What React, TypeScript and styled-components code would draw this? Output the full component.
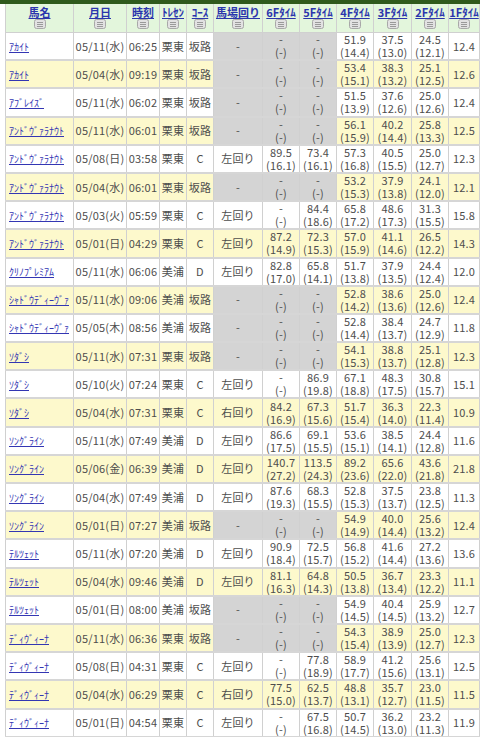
import styled, { createGlobalStyle } from "styled-components"

const GlobalStyle = createGlobalStyle`
  html, body {
    margin: 0;
    padding: 0;
    background: #fff;
  }
  body {
    font-family: "Noto Sans CJK JP", "Noto Sans", sans-serif;
  }
`

const TopBar = styled.div`
  height: 4px;
  background: #2f5a1c;
`

const Wrapper = styled.div`
  width: 100%;
  overflow: hidden;
  padding-left: 5px;
  box-sizing: border-box;
`

const Table = styled.table`
  border-collapse: collapse;
  table-layout: fixed;
  width: 474px;
  font-size: 11px;
  color: #4d4d4d;
`

const HeadCell = styled.th`
  background: #e3f6dc;
  border: 1px solid #d0d0d0;
  border-top: none;
  height: 28px;
  padding: 0;
  vertical-align: top;
  text-align: center;
  white-space: nowrap;
  overflow: hidden;
`

const HeadLink = styled.a`
  display: block;
  color: #2b35ad;
  font-weight: bold;
  font-size: 11px;
  line-height: 14px;
  margin-top: 1px;
  text-decoration: underline;
`

const SortIcon = styled.svg`
  display: block;
  margin: 0 auto;
`

type Tone = "white" | "yellow" | "grey"

const toneColor: Record<Tone, string> = {
  white: "#ffffff",
  yellow: "#fdf9cc",
  grey: "#d4d4d4",
}

const Cell = styled.td<{ $tone: Tone; $left?: boolean }>`
  background: ${(p) => toneColor[p.$tone]};
  border-left: 1px solid #d0d0d0;
  border-right: 1px solid #d0d0d0;
  border-bottom: 2px solid #d6d6d6;
  height: 26.2px;
  padding: 0 ${(p) => (p.$left ? "3px" : "0")};
  text-align: ${(p) => (p.$left ? "left" : "center")};
  vertical-align: middle;
  white-space: nowrap;
  overflow: hidden;
  line-height: 13px;
  letter-spacing: 0.2px;
`

const NameLink = styled.a`
  color: #3336b3;
  font-size: 10px;
  letter-spacing: 0;
  text-decoration: underline;
`

const Pair = styled.div`
  line-height: 13px;
`

type Split = [string, string] | null

interface Row {
  name: string
  date: string
  time: string
  center: string
  course: string
  turn: string
  f6: Split
  f5: Split
  f4: Split
  f3: Split
  f2: Split
  f1: string
}

const r = (
  name: string,
  date: string,
  time: string,
  center: string,
  course: string,
  turn: string,
  f6: Split,
  f5: Split,
  f4: Split,
  f3: Split,
  f2: Split,
  f1: string
): Row => ({ name, date, time, center, course, turn, f6, f5, f4, f3, f2, f1 })

const D: Split = ["-", "(-)"]
const s = (a: string, b: string): Split => [a, `(${b})`]

const rows: Row[] = [
  r("ｱｶｲﾄ", "05/11(水)", "06:25", "栗東", "坂路", "-", D, D, s("51.9", "14.4"), s("37.5", "13.0"), s("24.5", "12.1"), "12.4"),
  r("ｱｶｲﾄ", "05/04(水)", "09:19", "栗東", "坂路", "-", D, D, s("53.4", "15.1"), s("38.3", "13.2"), s("25.1", "12.5"), "12.6"),
  r("ｱﾌﾞﾚｲｽﾞ", "05/11(水)", "06:02", "栗東", "坂路", "-", D, D, s("51.5", "13.9"), s("37.6", "12.6"), s("25.0", "12.6"), "12.4"),
  r("ｱﾝﾄﾞｳﾞｧﾗﾅｳﾄ", "05/11(水)", "06:01", "栗東", "坂路", "-", D, D, s("56.1", "15.9"), s("40.2", "14.4"), s("25.8", "13.3"), "12.5"),
  r("ｱﾝﾄﾞｳﾞｧﾗﾅｳﾄ", "05/08(日)", "03:58", "栗東", "C", "左回り", s("89.5", "16.1"), s("73.4", "16.1"), s("57.3", "16.8"), s("40.5", "15.5"), s("25.0", "12.7"), "12.3"),
  r("ｱﾝﾄﾞｳﾞｧﾗﾅｳﾄ", "05/04(水)", "06:01", "栗東", "坂路", "-", D, D, s("53.2", "15.3"), s("37.9", "13.8"), s("24.1", "12.0"), "12.1"),
  r("ｱﾝﾄﾞｳﾞｧﾗﾅｳﾄ", "05/03(火)", "05:59", "栗東", "C", "左回り", D, s("84.4", "18.6"), s("65.8", "17.2"), s("48.6", "17.3"), s("31.3", "15.5"), "15.8"),
  r("ｱﾝﾄﾞｳﾞｧﾗﾅｳﾄ", "05/01(日)", "04:29", "栗東", "C", "左回り", s("87.2", "14.9"), s("72.3", "15.3"), s("57.0", "15.9"), s("41.1", "14.6"), s("26.5", "12.2"), "14.3"),
  r("ｸﾘﾉﾌﾟﾚﾐｱﾑ", "05/11(水)", "06:06", "美浦", "D", "左回り", s("82.8", "17.0"), s("65.8", "14.1"), s("51.7", "13.8"), s("37.9", "13.5"), s("24.4", "12.4"), "12.0"),
  r("ｼｬﾄﾞｳﾃﾞｨｰｳﾞｧ", "05/11(水)", "09:06", "美浦", "坂路", "-", D, D, s("52.8", "14.2"), s("38.6", "13.6"), s("25.0", "12.6"), "12.4"),
  r("ｼｬﾄﾞｳﾃﾞｨｰｳﾞｧ", "05/05(木)", "08:56", "美浦", "坂路", "-", D, D, s("52.8", "14.4"), s("38.4", "13.7"), s("24.7", "12.9"), "11.8"),
  r("ｿﾀﾞｼ", "05/11(水)", "07:31", "栗東", "坂路", "-", D, D, s("54.1", "15.3"), s("38.8", "13.7"), s("25.1", "12.8"), "12.3"),
  r("ｿﾀﾞｼ", "05/10(火)", "07:24", "栗東", "C", "左回り", D, s("86.9", "19.8"), s("67.1", "18.8"), s("48.3", "17.5"), s("30.8", "15.7"), "15.1"),
  r("ｿﾀﾞｼ", "05/04(水)", "07:31", "栗東", "C", "右回り", s("84.2", "16.9"), s("67.3", "15.6"), s("51.7", "15.4"), s("36.3", "14.0"), s("22.3", "11.4"), "10.9"),
  r("ｿﾝｸﾞﾗｲﾝ", "05/11(水)", "07:49", "美浦", "D", "左回り", s("86.6", "17.5"), s("69.1", "15.5"), s("53.6", "15.1"), s("38.5", "14.1"), s("24.4", "12.8"), "11.6"),
  r("ｿﾝｸﾞﾗｲﾝ", "05/06(金)", "06:39", "美浦", "D", "左回り", s("140.7", "27.2"), s("113.5", "24.3"), s("89.2", "23.6"), s("65.6", "22.0"), s("43.6", "21.8"), "21.8"),
  r("ｿﾝｸﾞﾗｲﾝ", "05/04(水)", "07:49", "美浦", "D", "左回り", s("87.6", "19.3"), s("68.3", "15.5"), s("52.8", "15.3"), s("37.5", "13.7"), s("23.8", "12.5"), "11.3"),
  r("ｿﾝｸﾞﾗｲﾝ", "05/01(日)", "07:27", "美浦", "坂路", "-", D, D, s("54.9", "14.9"), s("40.0", "14.4"), s("25.6", "13.2"), "12.4"),
  r("ﾃﾙﾂｪｯﾄ", "05/11(水)", "07:20", "美浦", "D", "左回り", s("90.9", "18.4"), s("72.5", "15.7"), s("56.8", "15.2"), s("41.6", "14.4"), s("27.2", "13.6"), "13.6"),
  r("ﾃﾙﾂｪｯﾄ", "05/04(水)", "09:46", "美浦", "D", "左回り", s("81.1", "16.3"), s("64.8", "14.3"), s("50.5", "13.8"), s("36.7", "13.4"), s("23.3", "12.2"), "11.1"),
  r("ﾃﾙﾂｪｯﾄ", "05/01(日)", "08:00", "美浦", "坂路", "-", D, D, s("54.9", "14.5"), s("40.4", "14.5"), s("25.9", "13.2"), "12.7"),
  r("ﾃﾞｨｳﾞｨｰﾅ", "05/11(水)", "06:36", "栗東", "坂路", "-", D, D, s("54.3", "15.4"), s("38.9", "13.9"), s("25.0", "12.7"), "12.3"),
  r("ﾃﾞｨｳﾞｨｰﾅ", "05/08(日)", "04:31", "栗東", "C", "左回り", D, s("77.8", "18.9"), s("58.9", "17.7"), s("41.2", "15.6"), s("25.6", "13.1"), "12.5"),
  r("ﾃﾞｨｳﾞｨｰﾅ", "05/04(水)", "06:29", "栗東", "C", "右回り", s("77.5", "15.0"), s("62.5", "13.7"), s("48.8", "13.1"), s("35.7", "12.7"), s("23.0", "11.5"), "11.5"),
  r("ﾃﾞｨｳﾞｨｰﾅ", "05/01(日)", "04:54", "栗東", "C", "左回り", D, s("67.5", "16.8"), s("50.7", "14.5"), s("36.2", "13.0"), s("23.2", "11.3"), "11.9"),
]

const columns: { label: string; width: number }[] = [
  { label: "馬名", width: 68 },
  { label: "月日", width: 53 },
  { label: "時刻", width: 33 },
  { label: "ﾄﾚｾﾝ", width: 27 },
  { label: "ｺｰｽ", width: 27 },
  { label: "馬場回り", width: 49 },
  { label: "6Fﾀｲﾑ", width: 37 },
  { label: "5Fﾀｲﾑ", width: 37 },
  { label: "4Fﾀｲﾑ", width: 37 },
  { label: "3Fﾀｲﾑ", width: 38 },
  { label: "2Fﾀｲﾑ", width: 37 },
  { label: "1Fﾀｲﾑ", width: 31 },
]

function Sort() {
  return (
    <SortIcon width="12" height="10" viewBox="0 0 12 10">
      <rect x="0.5" y="0.5" width="11" height="9" rx="2" fill="#e2e2e2" stroke="#a8a8a8" />
      <line x1="3" y1="3.5" x2="9" y2="3.5" stroke="#9a9a9a" />
      <line x1="3" y1="5.5" x2="9" y2="5.5" stroke="#9a9a9a" />
      <line x1="3" y1="7.5" x2="9" y2="7.5" stroke="#9a9a9a" />
    </SortIcon>
  )
}

function Two({ v }: { v: Split }) {
  if (!v) return null
  return (
    <>
      <Pair>{v[0]}</Pair>
      <Pair>{v[1]}</Pair>
    </>
  )
}

export default function App() {
  return (
    <>
      <GlobalStyle />
      <TopBar />
      <Wrapper>
        <Table>
          <colgroup>
            {columns.map((c) => (
              <col key={c.label} style={{ width: c.width }} />
            ))}
          </colgroup>
          <thead>
            <tr>
              {columns.map((c) => (
                <HeadCell key={c.label}>
                  <HeadLink href="#">{c.label}</HeadLink>
                  <Sort />
                </HeadCell>
              ))}
            </tr>
          </thead>
          <tbody>
            {rows.map((row, i) => {
              const base: Tone = i % 2 === 0 ? "white" : "yellow"
              const slope = row.course === "坂路"
              const mid: Tone = slope ? "grey" : base
              return (
                <tr key={i}>
                  <Cell $tone={base} $left>
                    <NameLink href="#">{row.name}</NameLink>
                  </Cell>
                  <Cell $tone={base}>{row.date}</Cell>
                  <Cell $tone={base}>{row.time}</Cell>
                  <Cell $tone={base}>{row.center}</Cell>
                  <Cell $tone={base}>{row.course}</Cell>
                  <Cell $tone={mid}>{row.turn}</Cell>
                  <Cell $tone={mid}>
                    <Two v={row.f6} />
                  </Cell>
                  <Cell $tone={mid}>
                    <Two v={row.f5} />
                  </Cell>
                  <Cell $tone={base}>
                    <Two v={row.f4} />
                  </Cell>
                  <Cell $tone={base}>
                    <Two v={row.f3} />
                  </Cell>
                  <Cell $tone={base}>
                    <Two v={row.f2} />
                  </Cell>
                  <Cell $tone={base}>{row.f1}</Cell>
                </tr>
              )
            })}
          </tbody>
        </Table>
      </Wrapper>
    </>
  )
}
